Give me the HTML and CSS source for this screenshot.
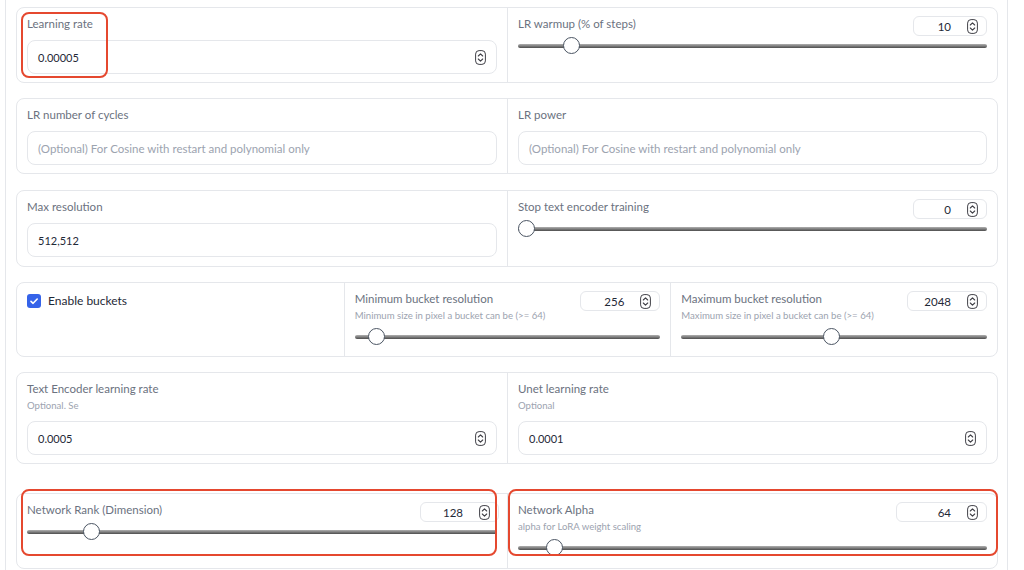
FILE: index.html
```html
<!DOCTYPE html>
<html lang="en">
<head>
  <meta charset="UTF-8">
  <title>LoRA training parameters</title>
  <link rel="stylesheet" href="styles.css">
</head>
<body>
  <div class="panel">

    <div class="row cols-2">
      <div class="cell">
        <span class="mark mark-lr"></span>
        <div class="label">Learning rate</div>
        <div class="field">
          <span class="value">0.00005</span>
          <svg class="spin" viewBox="0 0 11 15"><rect x="0.6" y="0.6" width="9.8" height="13.8" rx="3.5"/><path d="M3.3 6 5.5 3.8 7.7 6M3.3 9 5.5 11.2 7.7 9"/></svg>
        </div>
      </div>
      <div class="cell">
        <div class="head">
          <div class="label">LR warmup (% of steps)</div>
          <div class="num num-sm"><span>10</span><svg class="spin" viewBox="0 0 11 15"><rect x="0.6" y="0.6" width="9.8" height="13.8" rx="3.5"/><path d="M3.3 6 5.5 3.8 7.7 6M3.3 9 5.5 11.2 7.7 9"/></svg></div>
        </div>
        <input class="slider" type="range" min="0" max="100" value="10">
      </div>
    </div>

    <div class="row cols-2">
      <div class="cell">
        <div class="label">LR number of cycles</div>
        <div class="field"><span class="placeholder">(Optional) For Cosine with restart and polynomial only</span></div>
      </div>
      <div class="cell">
        <div class="label">LR power</div>
        <div class="field"><span class="placeholder">(Optional) For Cosine with restart and polynomial only</span></div>
      </div>
    </div>

    <div class="row cols-2 row-res">
      <div class="cell">
        <div class="label">Max resolution</div>
        <div class="field"><span class="value">512,512</span></div>
      </div>
      <div class="cell">
        <div class="head">
          <div class="label">Stop text encoder training</div>
          <div class="num num-sm"><span>0</span><svg class="spin" viewBox="0 0 11 15"><rect x="0.6" y="0.6" width="9.8" height="13.8" rx="3.5"/><path d="M3.3 6 5.5 3.8 7.7 6M3.3 9 5.5 11.2 7.7 9"/></svg></div>
        </div>
        <input class="slider" type="range" min="0" max="100" value="0">
      </div>
    </div>

    <div class="row cols-3 row-buckets">
      <div class="cell">
        <label class="check">
          <span class="box"><svg viewBox="0 0 14 14"><path d="M4 7.3 6.1 9.3 10.2 5"/></svg></span>
          Enable buckets
        </label>
      </div>
      <div class="cell">
        <div class="head">
          <div>
            <div class="label">Minimum bucket resolution</div>
            <div class="desc">Minimum size in pixel a bucket can be (&gt;= 64)</div>
          </div>
          <div class="num"><span>256</span><svg class="spin" viewBox="0 0 11 15"><rect x="0.6" y="0.6" width="9.8" height="13.8" rx="3.5"/><path d="M3.3 6 5.5 3.8 7.7 6M3.3 9 5.5 11.2 7.7 9"/></svg></div>
        </div>
        <input class="slider slider-desc" type="range" min="64" max="4096" value="256">
      </div>
      <div class="cell">
        <div class="head">
          <div>
            <div class="label">Maximum bucket resolution</div>
            <div class="desc">Maximum size in pixel a bucket can be (&gt;= 64)</div>
          </div>
          <div class="num"><span>2048</span><svg class="spin" viewBox="0 0 11 15"><rect x="0.6" y="0.6" width="9.8" height="13.8" rx="3.5"/><path d="M3.3 6 5.5 3.8 7.7 6M3.3 9 5.5 11.2 7.7 9"/></svg></div>
        </div>
        <input class="slider slider-desc" type="range" min="64" max="4096" value="2048">
      </div>
    </div>

    <div class="row cols-2 row-lr">
      <div class="cell">
        <div class="label">Text Encoder learning rate</div>
        <div class="desc">Optional. Se</div>
        <div class="field field-desc">
          <span class="value">0.0005</span>
          <svg class="spin" viewBox="0 0 11 15"><rect x="0.6" y="0.6" width="9.8" height="13.8" rx="3.5"/><path d="M3.3 6 5.5 3.8 7.7 6M3.3 9 5.5 11.2 7.7 9"/></svg>
        </div>
      </div>
      <div class="cell">
        <div class="label">Unet learning rate</div>
        <div class="desc">Optional</div>
        <div class="field field-desc">
          <span class="value">0.0001</span>
          <svg class="spin" viewBox="0 0 11 15"><rect x="0.6" y="0.6" width="9.8" height="13.8" rx="3.5"/><path d="M3.3 6 5.5 3.8 7.7 6M3.3 9 5.5 11.2 7.7 9"/></svg>
        </div>
      </div>
    </div>

    <div class="row cols-2 row-network">
      <div class="cell">
        <span class="mark mark-rank"></span>
        <div class="head">
          <div class="label">Network Rank (Dimension)</div>
          <div class="num num-rank"><span>128</span><svg class="spin" viewBox="0 0 11 15"><rect x="0.6" y="0.6" width="9.8" height="13.8" rx="3.5"/><path d="M3.3 6 5.5 3.8 7.7 6M3.3 9 5.5 11.2 7.7 9"/></svg></div>
        </div>
        <input class="slider" type="range" min="1" max="1024" value="128">
      </div>
      <div class="cell">
        <span class="mark mark-alpha"></span>
        <div class="head">
          <div>
            <div class="label">Network Alpha</div>
            <div class="desc">alpha for LoRA weight scaling</div>
          </div>
          <div class="num num-alpha"><span>64</span><svg class="spin" viewBox="0 0 11 15"><rect x="0.6" y="0.6" width="9.8" height="13.8" rx="3.5"/><path d="M3.3 6 5.5 3.8 7.7 6M3.3 9 5.5 11.2 7.7 9"/></svg></div>
        </div>
        <input class="slider slider-desc" type="range" min="1" max="1024" value="64">
      </div>
    </div>

  </div>
</body>
</html>
```

FILE: styles.css
```css
* {
  margin: 0;
  padding: 0;
  box-sizing: border-box;
}
body {
  background: #fff;
  font-family: 'Lato', 'Open Sans', sans-serif;
  color: #374151;
  overflow: hidden;
}
.panel {
  margin-left: 5px;
  width: 1003px;
  min-height: 570px;
  border-left: 1px solid #e5e7eb;
  border-right: 1px solid #e5e7eb;
  padding: 7px 9px 0 10px;
  display: flex;
  flex-direction: column;
  gap: 15px;
}
.row {
  display: grid;
  height: 76px;
  border: 1px solid #e5e7eb;
  border-radius: 8px;
}
.cols-2 {
  grid-template-columns: 1fr 1fr;
}
.cols-3 {
  grid-template-columns: 1fr 1fr 1fr;
}
.row-res {
  height: 77px;
  margin-top: 1px;
}
.row-buckets {
  height: 75px;
}
.row-lr {
  height: 92px;
}
.row-network {
  height: 76px;
  margin-top: 14px;
}
.cell {
  position: relative;
  padding: 7px 10px 8px 10px;
}
.cell + .cell {
  border-left: 1px solid #e5e7eb;
}
.label {
  font-size: 11.5px;
  line-height: 18px;
  color: #6b7280;
}
.desc {
  font-size: 9.6px;
  line-height: 16px;
  color: #9ca3af;
}
.field {
  display: flex;
  align-items: center;
  justify-content: space-between;
  height: 34px;
  margin-top: 7px;
  padding: 0 10px;
  border: 1px solid #e5e7eb;
  border-radius: 8px;
  font-size: 11.5px;
}
.field-desc {
  margin-top: 7px;
}
.value {
  font-size: 11px;
  color: #1f2937;
}
.placeholder {
  color: #9ca3af;
}
.spin {
  width: 11px;
  height: 15px;
  flex: none;
}
.spin rect,
.spin path {
  fill: none;
  stroke: #3f3f46;
  stroke-width: 1;
}
.spin path {
  stroke-width: 1.1;
  stroke-linecap: round;
  stroke-linejoin: round;
}
.head {
  display: flex;
  justify-content: space-between;
  align-items: flex-start;
}
.num {
  display: flex;
  align-items: center;
  justify-content: flex-end;
  gap: 16px;
  width: 80px;
  height: 20px;
  margin-top: 1px;
  padding-right: 8px;
  border: 1px solid #e5e7eb;
  border-radius: 6px;
  font-size: 11.5px;
  color: #1f2937;
}
.num-sm {
  width: 74px;
}
.num-rank {
  width: 79px;
  margin-right: -2px;
}
.num-alpha {
  width: 91px;
}
.slider {
  -webkit-appearance: none;
  appearance: none;
  display: block;
  width: 100%;
  height: 18px;
  margin-top: 1px;
  background: transparent;
}
.slider-desc {
  margin-top: 4px;
}
.slider::-webkit-slider-runnable-track {
  height: 4px;
  border-radius: 2px;
  background: linear-gradient(#b0b0b0, #4d4d4d);
}
.slider::-webkit-slider-thumb {
  -webkit-appearance: none;
  width: 17px;
  height: 17px;
  margin-top: -7px;
  border-radius: 50%;
  background: #fff;
  border: 1px solid #4b5563;
}
.check {
  display: flex;
  align-items: center;
  gap: 7px;
  margin-top: 3px;
  font-size: 12px;
  color: #1f2937;
}
.box {
  display: flex;
  width: 14px;
  height: 14px;
  border-radius: 3px;
  background: #3563e9;
}
.box svg {
  width: 14px;
  height: 14px;
}
.box path {
  fill: none;
  stroke: #fff;
  stroke-width: 1.6;
  stroke-linecap: round;
  stroke-linejoin: round;
}
.mark {
  position: absolute;
  border: 2px solid #e5482f;
  border-radius: 8px;
  pointer-events: none;
}
.mark-lr {
  left: 4px;
  top: 4px;
  width: 87px;
  height: 66px;
}
.mark-rank {
  left: 4px;
  top: -5px;
  width: 476px;
  height: 67px;
}
.mark-alpha {
  left: 0;
  top: -5px;
  width: 490px;
  height: 67px;
}
```
